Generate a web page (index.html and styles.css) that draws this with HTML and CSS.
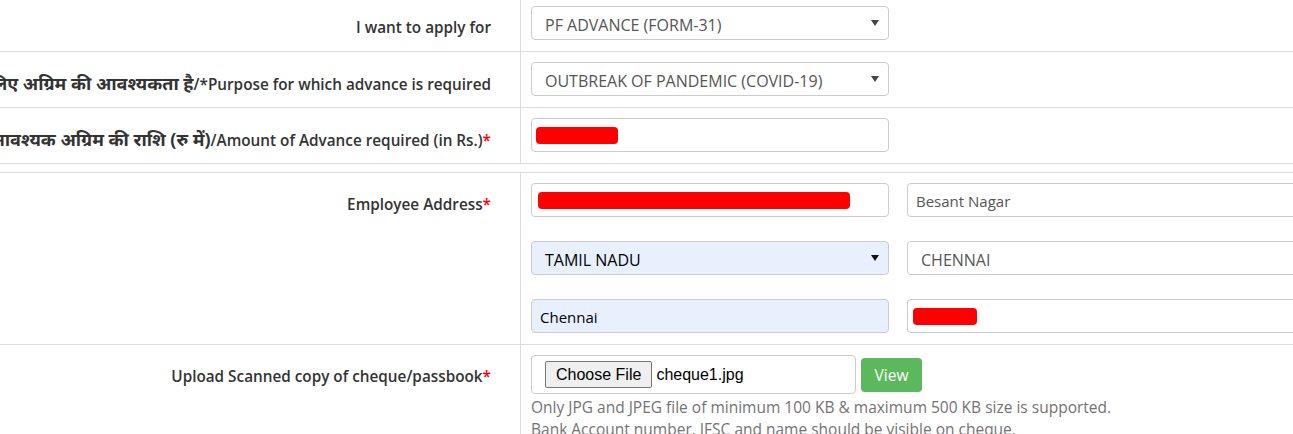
FILE: index.html
```html
<!DOCTYPE html>
<html lang="en">
<head>
<meta charset="utf-8">
<title>Claim form</title>
<link rel="stylesheet" href="styles.css">
</head>
<body>
<div class="page">
  <div class="section">
    <div class="row">
      <div class="label"><span class="label-text">I want to apply for</span></div>
      <div class="field">
        <div class="select"><span>PF ADVANCE (FORM-31)</span><svg class="caret" width="8" height="6" viewBox="0 0 8 6"><path d="M0 0H8L4 6Z"/></svg></div>
      </div>
    </div>
    <div class="row">
      <div class="label"><span class="label-text"><span class="hi">प्रयोजन जिसके लिए अग्रिम की आवश्यकता है</span>/*Purpose for which advance is required</span></div>
      <div class="field">
        <div class="select"><span>OUTBREAK OF PANDEMIC (COVID-19)</span><svg class="caret" width="8" height="6" viewBox="0 0 8 6"><path d="M0 0H8L4 6Z"/></svg></div>
      </div>
    </div>
    <div class="row">
      <div class="label"><span class="label-text"><span class="hi">आवश्यक अग्रिम की राशि (रु में)</span>/Amount of Advance required (in Rs.)<span class="req">*</span></span></div>
      <div class="field">
        <div class="input"><span class="redact redact-amount"></span></div>
      </div>
    </div>
  </div>

  <div class="section second">
    <div class="row">
      <div class="label"><span class="label-text">Employee Address<span class="req">*</span></span></div>
      <div class="field">
        <div class="address-grid">
          <div class="input"><span class="redact redact-addr"></span></div>
          <div class="input wide"><span>Besant Nagar</span></div>
          <div class="select autofill"><span>TAMIL NADU</span><svg class="caret dark" width="8" height="6" viewBox="0 0 8 6"><path d="M0 0H8L4 6Z"/></svg></div>
          <div class="select wide"><span>CHENNAI</span></div>
          <div class="input autofill"><span>Chennai</span></div>
          <div class="input wide"><span class="redact redact-pin"></span></div>
        </div>
      </div>
    </div>
    <div class="row">
      <div class="label"><span class="label-text">Upload Scanned copy of cheque/passbook<span class="req">*</span></span></div>
      <div class="field">
        <div class="upload-line">
          <div class="file-box"><span class="file-btn">Choose File</span><span class="file-name">cheque1.jpg</span></div>
          <span class="btn-view">View</span>
        </div>
        <p class="help">Only JPG and JPEG file of minimum 100 KB &amp; maximum 500 KB size is supported.</p>
        <p class="help">Bank Account number, IFSC and name should be visible on cheque.</p>
      </div>
    </div>
  </div>
</div>
</body>
</html>
```

FILE: styles.css
```css
* { box-sizing: border-box; }

html, body {
  margin: 0;
  padding: 0;
  background: #fff;
  overflow: hidden;
}

body {
  width: 1293px;
  height: 434px;
  font-family: "Open Sans", "Noto Sans", "Noto Sans Devanagari", "Lohit Devanagari", "FreeSans", sans-serif;
  color: #333;
}

.page {
  margin-top: -4px;
  width: 1293px;
}

.section {
  display: flex;
  flex-direction: column;
}

.section .row {
  display: flex;
  border-bottom: 1px solid #ddd;
}

.section.second {
  margin-top: 8px;
  border-top: 1px solid #ddd;
}

.label {
  width: 521px;
  flex: none;
  border-right: 1px solid #ddd;
  display: flex;
  justify-content: flex-end;
  padding: 21px 29px 0 0;
  overflow: hidden;
}

.label-text {
  white-space: nowrap;
  font-weight: 600;
  font-size: 15.3px;
  line-height: 20px;
  color: #333;
}

.hi {
  font-size: 18px;
  font-weight: 700;
  line-height: 20px;
}

.req { color: #f00; }

.field {
  flex: 1;
  min-width: 0;
  padding: 10px 0 11px 10px;
}

.select, .input {
  width: 358px;
  height: 34px;
  border: 1px solid #ccc;
  border-radius: 4px;
  background: #fff;
  display: flex;
  align-items: center;
  color: #555;
}

.select {
  font-size: 16px;
  padding: 3px 9px 0 13px;
  justify-content: space-between;
}

.select .caret { margin-top: -3px; }

.input {
  font-size: 15px;
  padding: 2px 8px 0;
}

.input .redact { margin-top: -2px; }

.caret { fill: #444; }
.caret.dark { fill: #111; }

.autofill {
  background: #e8f0fe;
  color: #000;
}

.redact {
  display: block;
  background: #f00;
  border-radius: 4px;
  height: 17px;
}

.redact-amount { width: 82px; margin-left: -4px; }
.redact-addr { width: 312px; margin-left: -2px; }
.redact-pin { width: 64px; margin-left: -3px; }

.address-grid {
  display: grid;
  grid-template-columns: 358px 420px;
  column-gap: 18px;
  row-gap: 24px;
}

.address-grid .wide { width: 420px; }

.upload-line {
  display: flex;
  align-items: center;
  gap: 5px;
}

.file-box {
  width: 325px;
  height: 39px;
  border: 1px solid #ccc;
  border-radius: 4px;
  display: flex;
  align-items: center;
  padding-left: 13px;
  font-family: "Liberation Sans", Arial, sans-serif;
  font-size: 16px;
  color: #000;
}

.file-btn {
  display: inline-block;
  height: 27px;
  line-height: 25px;
  padding: 0 10px;
  background: #efefef;
  border: 1px solid #767676;
  border-radius: 2px;
}

.file-name { margin-left: 4px; }

.btn-view {
  display: inline-block;
  width: 61px;
  height: 34px;
  line-height: 34px;
  text-align: center;
  background: #5cb85c;
  color: #fff;
  border-radius: 4px;
  font-size: 15.5px;
}

.help {
  margin: 0;
  font-size: 15.5px;
  line-height: 22px;
  color: #737373;
}

.upload-line + .help { margin-top: 2px; }
```
